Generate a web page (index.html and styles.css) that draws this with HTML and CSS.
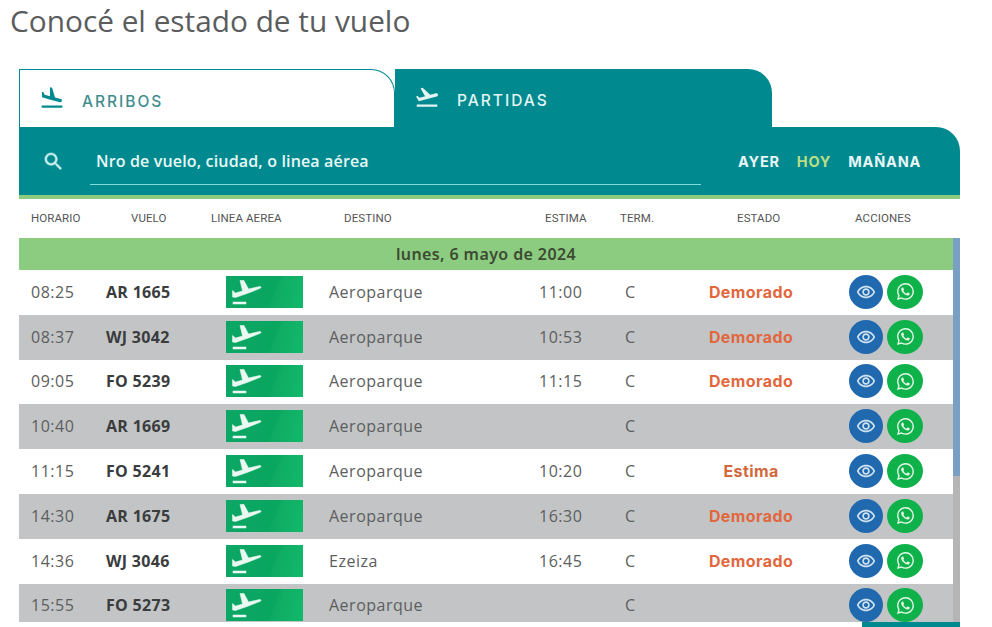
FILE: index.html

```html
<!DOCTYPE html>
<html lang="es">
<head>
    <meta charset="UTF-8">
    <meta name="viewport" content="width=device-width, initial-scale=1.0">
    <title>Estado de tu vuelo</title>
    <link rel="stylesheet" href="styles.css">
</head>
<body>
    <svg class="defs" aria-hidden="true">
        <symbol id="i-eye" viewBox="0 0 24 24"><path d="M12 6.500c3.790 0 7.170 2.130 8.820 5.500-1.650 3.370-5.020 5.500-8.820 5.500S4.830 15.370 3.180 12C4.830 8.630 8.210 6.500 12 6.500m0-2C7 4.500 2.730 7.610 1 12c1.730 4.390 6 7.500 11 7.500s9.270-3.110 11-7.500c-1.730-4.390-6-7.500-11-7.500zm0 5c1.380 0 2.500 1.120 2.500 2.500s-1.120 2.500-2.500 2.500-2.500-1.120-2.500-2.500 1.120-2.500 2.500-2.500m0-2c-2.480 0-4.500 2.020-4.500 4.500s2.020 4.500 4.500 4.500 4.500-2.020 4.500-4.500-2.020-4.500-4.500-4.500z"/></symbol>
        <symbol id="i-wa" viewBox="0 0 16 16"><path d="M13.601 2.326A7.854 7.854 0 0 0 7.994 0C3.627 0 .068 3.558.064 7.926c0 1.399.366 2.76 1.057 3.965L0 16l4.204-1.102a7.933 7.933 0 0 0 3.790.965h.004c4.368 0 7.926-3.558 7.930-7.930A7.898 7.898 0 0 0 13.600 2.326zM7.994 14.521a6.573 6.573 0 0 1-3.356-.92l-.24-.144-2.494.654.666-2.433-.156-.251a6.560 6.560 0 0 1-1.007-3.505c0-3.626 2.957-6.584 6.591-6.584a6.560 6.560 0 0 1 4.660 1.931 6.557 6.557 0 0 1 1.928 4.660c-.004 3.639-2.961 6.592-6.592 6.592zm3.615-4.934c-.197-.099-1.170-.578-1.353-.646-.182-.065-.315-.099-.445.099-.133.197-.513.646-.627.775-.114.133-.232.148-.43.050-.197-.1-.836-.308-1.592-.985-.59-.525-.985-1.175-1.103-1.372-.114-.198-.011-.304.088-.403.087-.088.197-.232.296-.346.1-.114.133-.198.198-.33.065-.134.034-.248-.015-.347-.05-.099-.445-1.076-.612-1.470-.16-.389-.323-.335-.445-.34-.114-.007-.247-.007-.38-.007a.729.729 0 0 0-.529.247c-.182.198-.691.677-.691 1.654 0 .977.710 1.916.810 2.049.098.133 1.394 2.132 3.383 2.992.470.205.840.326 1.129.418.475.152.904.129 1.246.080.380-.058 1.171-.48 1.338-.943.164-.464.164-.86.114-.943-.049-.084-.182-.133-.38-.232z"/></symbol>
        <symbol id="i-logo" viewBox="0 0 77 32"><path d="M6.500 14.500l3 2.500 7-2-2.500-10.500h4l4.500 8.500 11-2.500c1.500-.3 2 1.300.8 1.800l-11.800 4.700-13 4.500-3-.5z"/><rect x="7" y="26" width="13" height="2"/></symbol>
    </svg>

    <h1 class="title">Conocé el estado de tu vuelo</h1>

    <section class="board">
        <div class="tabs">
            <a class="tab tab-off">
                <svg viewBox="0 0 24 24"><path d="M2.500 19h19v2h-19zm7.180-5.730l4.350 1.160 5.310 1.420c.8.210 1.620-.26 1.840-1.060.21-.8-.26-1.620-1.060-1.840l-5.310-1.420-2.760-9.020L10.120 2v8.280L5.150 8.950l-.93-2.320-1.450-.39v5.170l1.600.43 5.310 1.430z"/></svg>
                ARRIBOS
            </a>
            <a class="tab tab-on">
                <svg viewBox="0 0 24 24"><path d="M2.500 19h19v2h-19zm19.570-9.360c-.21-.8-1.040-1.280-1.840-1.060L14.920 10l-6.900-6.430-1.930.51 4.140 7.170-4.970 1.330-1.970-1.540-1.450.39 1.820 3.160.77 1.330 1.600-.43 5.310-1.420 4.350-1.160L21 11.490c.81-.23 1.280-1.050 1.070-1.850z"/></svg>
                PARTIDAS
            </a>
        </div>

        <div class="search-bar">
            <svg class="search-icon" viewBox="0 0 24 24"><path d="M15.500 14h-.79l-.28-.27C15.410 12.590 16 11.110 16 9.500 16 5.910 13.090 3 9.500 3S3 5.910 3 9.500 5.910 16 9.500 16c1.610 0 3.090-.59 4.230-1.570l.27.28v.79l5 4.990L20.490 19l-4.990-5zm-6 0C7.010 14 5 11.990 5 9.500S7.010 5 9.500 5 14 7.010 14 9.500 11.990 14 9.500 14z"/></svg>
            <input class="search-input" type="text" placeholder="Nro de vuelo, ciudad, o linea aérea">
            <nav class="days">
                <a>AYER</a>
                <a class="day-on">HOY</a>
                <a>MAÑANA</a>
            </nav>
        </div>

        <div class="cols">
            <span>HORARIO</span>
            <span>VUELO</span>
            <span>LINEA AEREA</span>
            <span>DESTINO</span>
            <span>ESTIMA</span>
            <span>TERM.</span>
            <span>ESTADO</span>
            <span>ACCIONES</span>
        </div>

        <div class="list-wrap">
            <div class="list">
                <div class="date-row">lunes, 6 mayo de 2024</div>

                <div class="row">
                    <span>08:25</span><b>AR 1665</b>
                    <svg class="logo"><use href="#i-logo"/></svg>
                    <span>Aeroparque</span><span>11:00</span><span>C</span>
                    <strong class="late">Demorado</strong>
                    <div class="actions">
                        <a class="btn btn-eye"><svg><use href="#i-eye"/></svg></a>
                        <a class="btn btn-wa"><svg><use href="#i-wa"/></svg></a>
                    </div>
                </div>
                <div class="row">
                    <span>08:37</span><b>WJ 3042</b>
                    <svg class="logo"><use href="#i-logo"/></svg>
                    <span>Aeroparque</span><span>10:53</span><span>C</span>
                    <strong class="late">Demorado</strong>
                    <div class="actions">
                        <a class="btn btn-eye"><svg><use href="#i-eye"/></svg></a>
                        <a class="btn btn-wa"><svg><use href="#i-wa"/></svg></a>
                    </div>
                </div>
                <div class="row">
                    <span>09:05</span><b>FO 5239</b>
                    <svg class="logo"><use href="#i-logo"/></svg>
                    <span>Aeroparque</span><span>11:15</span><span>C</span>
                    <strong class="late">Demorado</strong>
                    <div class="actions">
                        <a class="btn btn-eye"><svg><use href="#i-eye"/></svg></a>
                        <a class="btn btn-wa"><svg><use href="#i-wa"/></svg></a>
                    </div>
                </div>
                <div class="row">
                    <span>10:40</span><b>AR 1669</b>
                    <svg class="logo"><use href="#i-logo"/></svg>
                    <span>Aeroparque</span><span></span><span>C</span>
                    <strong class="late"></strong>
                    <div class="actions">
                        <a class="btn btn-eye"><svg><use href="#i-eye"/></svg></a>
                        <a class="btn btn-wa"><svg><use href="#i-wa"/></svg></a>
                    </div>
                </div>
                <div class="row">
                    <span>11:15</span><b>FO 5241</b>
                    <svg class="logo"><use href="#i-logo"/></svg>
                    <span>Aeroparque</span><span>10:20</span><span>C</span>
                    <strong class="soon">Estima</strong>
                    <div class="actions">
                        <a class="btn btn-eye"><svg><use href="#i-eye"/></svg></a>
                        <a class="btn btn-wa"><svg><use href="#i-wa"/></svg></a>
                    </div>
                </div>
                <div class="row">
                    <span>14:30</span><b>AR 1675</b>
                    <svg class="logo"><use href="#i-logo"/></svg>
                    <span>Aeroparque</span><span>16:30</span><span>C</span>
                    <strong class="late">Demorado</strong>
                    <div class="actions">
                        <a class="btn btn-eye"><svg><use href="#i-eye"/></svg></a>
                        <a class="btn btn-wa"><svg><use href="#i-wa"/></svg></a>
                    </div>
                </div>
                <div class="row">
                    <span>14:36</span><b>WJ 3046</b>
                    <svg class="logo"><use href="#i-logo"/></svg>
                    <span>Ezeiza</span><span>16:45</span><span>C</span>
                    <strong class="late">Demorado</strong>
                    <div class="actions">
                        <a class="btn btn-eye"><svg><use href="#i-eye"/></svg></a>
                        <a class="btn btn-wa"><svg><use href="#i-wa"/></svg></a>
                    </div>
                </div>
                <div class="row">
                    <span>15:55</span><b>FO 5273</b>
                    <svg class="logo"><use href="#i-logo"/></svg>
                    <span>Aeroparque</span><span></span><span>C</span>
                    <strong class="late"></strong>
                    <div class="actions">
                        <a class="btn btn-eye"><svg><use href="#i-eye"/></svg></a>
                        <a class="btn btn-wa"><svg><use href="#i-wa"/></svg></a>
                    </div>
                </div>
            </div>
            <div class="scrollbar"></div>
        </div>
        <div class="foot-tab"></div>
    </section>
</body>
</html>
```

FILE: styles.css

```css
* {
    box-sizing: border-box;
}

html, body {
    height: 100%;
    overflow: hidden;
}

body {
    margin: 0;
    background-color: #fff;
    color: #555;
    font-family: "Open Sans", sans-serif;
}

.defs {
    display: none;
}

.title {
    margin: 0;
    padding: 2px 0 0 10px;
    height: 69px;
    font-size: 29.800px;
    line-height: 38px;
    font-weight: 400;
    color: #5a5c5e;
}

.board {
    margin-left: 19px;
    width: 941px;
}

/* tabs */
.tabs {
    display: flex;
    height: 58px;
}

.tab {
    display: flex;
    align-items: center;
    font-family: Inter, sans-serif;
    font-size: 15.500px;
    font-weight: 500;
    letter-spacing: 2px;
}

.tab svg {
    width: 26px;
    height: 26px;
    margin-right: 17px;
    fill: currentColor;
}

.tab-off {
    width: 376px;
    padding: 6px 0 0 19px;
    color: #3f8d8f;
    background-color: #fff;
    border: 1px solid #008a90;
    border-bottom: 0;
    border-top-right-radius: 24px;
}

.tab-off svg {
    color: #008a90;
    margin-top: -8px;
}

.tab-on {
    width: 377px;
    padding: 4px 0 0 19px;
    color: #e4f4f4;
    background-color: #008a90;
    border-top-right-radius: 24px;
}

.tab-on svg {
    margin-top: -6px;
}

/* search */
.search-bar {
    display: flex;
    align-items: center;
    height: 72px;
    padding: 0 41px 0 23px;
    background-color: #008a90;
    border-top-right-radius: 24px;
    border-bottom: 4px solid #8ccc80;
}

.search-icon {
    flex: none;
    width: 23px;
    height: 23px;
    margin: 0 25px 0 0;
    fill: #c9efec;
    stroke: #c9efec;
    stroke-width: .5;
}

.search-input {
    flex: none;
    width: 611px;
    height: 47px;
    margin-top: 1px;
    padding: 0 6px 0;
    color: #fff;
    font-family: "Open Sans", sans-serif;
    font-size: 16px;
    font-weight: 600;
    letter-spacing: .16px;
    background: transparent;
    border: 0;
    border-bottom: 1px solid #7fdcdc;
    outline: 0;
}

.search-input::placeholder {
    color: #e8f8f6;
    opacity: 1;
}

.days {
    display: flex;
    gap: 17px;
    margin: 1px 0 0 37px;
    font-family: Inter, sans-serif;
    font-size: 14.500px;
    font-weight: 700;
    letter-spacing: .8px;
    color: #e8f6f6;
}

.day-on {
    color: #b9df85;
}

/* column titles */
.cols {
    display: grid;
    grid-template-columns: 100px 80px 133px 201px 75px 117px 118px 1fr;
    align-items: center;
    height: 39px;
    padding: 0 0 2px 12px;
    font-family: Roboto, sans-serif;
    font-size: 11.500px;
    letter-spacing: .1px;
    color: #555;
}

/* list */
.list-wrap {
    display: flex;
    height: 384px;
    overflow: hidden;
}

.list {
    flex: none;
    width: 934px;
}

.scrollbar {
    flex: none;
    width: 7px;
    background: linear-gradient(#7a9fc4 0 62%, #b5b5b5 62%);
}

.date-row {
    height: 32px;
    line-height: 32px;
    text-align: center;
    font-family: "Noto Sans", sans-serif;
    font-size: 16px;
    font-weight: 600;
    letter-spacing: .4px;
    color: #3d4a33;
    background-color: #8ccc80;
}

.row {
    display: grid;
    grid-template-columns: 75px 120px 103px 210px 86px 52px 148px 1fr;
    align-items: center;
    height: 44.800px;
    padding: 0 0 1px 12px;
    font-size: 16px;
    letter-spacing: .5px;
    color: #5c5e60;
}

.row:nth-child(odd) {
    background-color: #c2c4c5;
}

.row b {
    font-weight: 700;
    letter-spacing: .3px;
    color: #3a3c3e;
}

.row strong {
    font-family: Inter, sans-serif;
    font-size: 16px;
    font-weight: 700;
    letter-spacing: .4px;
    text-align: center;
}

.late {
    color: #e2673d;
}

.soon {
    color: #d2693c;
}

.logo {
    display: block;
    width: 77px;
    height: 32px;
    fill: #eafaf2;
    stroke: #eafaf2;
    stroke-width: .5;
    background:
        linear-gradient(115deg, transparent 0 62%, rgba(255, 255, 255, .025) 62%),
        linear-gradient(100deg, #0da666, #09a660 60%, #0cb866);
}

.actions {
    display: flex;
    gap: 4px;
    padding-left: 24px;
}

.btn {
    display: flex;
    align-items: center;
    justify-content: center;
    height: 34px;
    border-radius: 50%;
}

.btn-eye {
    width: 34px;
    background-color: #2169ae;
}

.btn-eye svg {
    width: 20px;
    height: 20px;
    fill: #cfe2f2;
}

.btn-wa {
    width: 36px;
    background-color: #0fb24a;
}

.btn-wa svg {
    width: 17px;
    height: 17px;
    fill: #e6f8ea;
}

.foot-tab {
    height: 5px;
    width: 98px;
    margin-left: auto;
    background-color: #008a90;
}
```
